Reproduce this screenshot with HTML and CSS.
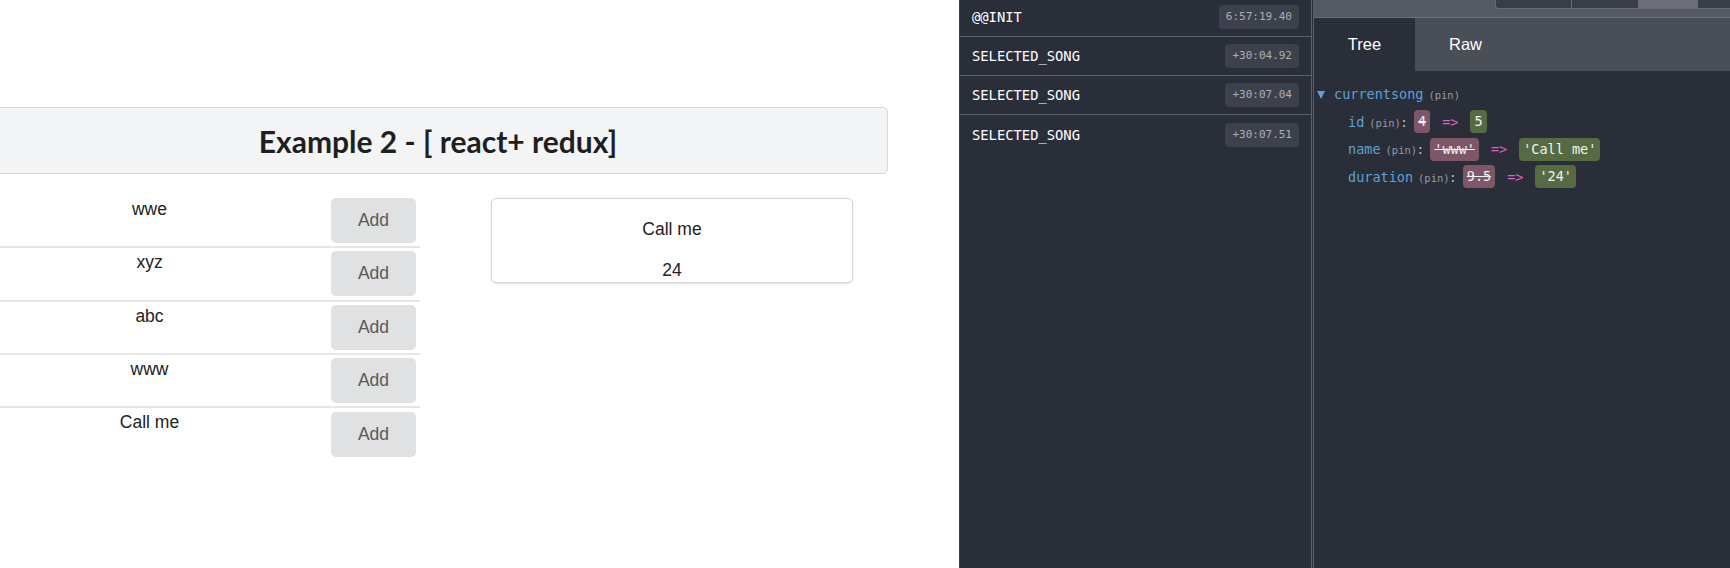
FILE: index.html
```html
<!DOCTYPE html>
<html lang="en">
<head>
<meta charset="utf-8">
<title>Example 2 - react + redux</title>
<link rel="stylesheet" href="styles.css">
</head>
<body>
<div class="screen">
  <main class="app">
    <div class="page">
      <h2 class="title">Example 2 - [ react+ redux]</h2>
      <div class="content">
        <ul class="songs">
          <li class="song"><span class="song-name">wwe</span><button class="add">Add</button></li>
          <li class="song"><span class="song-name">xyz</span><button class="add">Add</button></li>
          <li class="song"><span class="song-name">abc</span><button class="add">Add</button></li>
          <li class="song"><span class="song-name">www</span><button class="add">Add</button></li>
          <li class="song"><span class="song-name">Call me</span><button class="add">Add</button></li>
        </ul>
        <div class="card">
          <div class="card-title">Call me</div>
          <div class="card-dur">24</div>
        </div>
      </div>
    </div>
  </main>
  <aside class="devtools">
    <div class="actions">
      <div class="action"><span class="action-name">@@INIT</span><span class="time">6:57:19.40</span></div>
      <div class="action"><span class="action-name">SELECTED_SONG</span><span class="time">+30:04.92</span></div>
      <div class="action"><span class="action-name">SELECTED_SONG</span><span class="time">+30:07.04</span></div>
      <div class="action"><span class="action-name">SELECTED_SONG</span><span class="time">+30:07.51</span></div>
    </div>
    <div class="divider"></div>
    <div class="inspector">
      <div class="topbar">
        <div class="seg-group">
          <span class="seg seg-a"></span>
          <span class="seg seg-b"></span>
          <span class="seg seg-c active"></span>
          <span class="seg seg-d"></span>
        </div>
      </div>
      <div class="tabs">
        <div class="tab active">Tree</div>
        <div class="tab">Raw</div>
      </div>
      <div class="tree">
        <div class="tree-line"><span class="caret"></span><span class="key">currentsong</span><span class="pin">(pin)</span></div>
        <div class="tree-children">
          <div class="tree-line"><span class="key">id</span><span class="pin">(pin)</span><span class="colon">:</span><span class="val removed">4</span><span class="arrow">=&gt;</span><span class="val added">5</span></div>
          <div class="tree-line"><span class="key">name</span><span class="pin">(pin)</span><span class="colon">:</span><span class="val removed">'www'</span><span class="arrow">=&gt;</span><span class="val added">'Call me'</span></div>
          <div class="tree-line"><span class="key">duration</span><span class="pin">(pin)</span><span class="colon">:</span><span class="val removed">9.5</span><span class="arrow">=&gt;</span><span class="val added">'24'</span></div>
        </div>
      </div>
    </div>
  </aside>
</div>
</body>
</html>
```

FILE: styles.css
```css
* { box-sizing: border-box; }

html, body {
  margin: 0;
  padding: 0;
  background: #ffffff;
}

.screen {
  display: flex;
  width: 1730px;
  height: 568px;
  overflow: hidden;
  font-family: "Liberation Sans", Arial, sans-serif;
}

/* ---------- app side ---------- */
.app {
  width: 959px;
  flex: none;
  overflow: hidden;
  background: #ffffff;
  padding-top: 107px;
}

.page {
  width: 900px;
  margin-left: -12px;
}

.title {
  margin: 0;
  height: 67px;
  line-height: 67px;
  text-align: center;
  font-family: Lato, "Liberation Sans", sans-serif;
  font-weight: 700;
  font-size: 30px;
  color: #1f1f1f;
  background: #f3f4f5;
  border: 1px solid #d6d7d8;
  border-radius: 5px;
}

.content {
  display: flex;
  align-items: flex-start;
  margin-top: 21px;
}

.songs {
  list-style: none;
  margin: 0;
  padding: 0;
  width: 432px;
  flex: none;
}

.song {
  display: flex;
  align-items: center;
  height: 53.33px;
  border-bottom: 2px solid #e6e6e6;
}

.song:last-child {
  border-bottom: none;
}

.song-name {
  align-self: flex-start;
  width: 323px;
  padding-top: 2px;
  text-align: center;
  font-size: 17.5px;
  line-height: 25px;
  color: #222222;
}

.add {
  margin-left: 20px;
  width: 85px;
  height: 45px;
  padding: 0;
  border: none;
  border-radius: 5px;
  background: #e0e1e2;
  color: #595959;
  font-family: "Liberation Sans", Arial, sans-serif;
  font-size: 17.5px;
  line-height: 45px;
  text-align: center;
}

.card {
  flex: none;
  width: 362px;
  margin-left: 71px;
  margin-top: 3px;
  padding: 17.5px 0 2px;
  border: 1px solid #d4d4d5;
  border-radius: 5px;
  box-shadow: 0 1px 2px 0 rgba(34, 36, 38, 0.15);
  text-align: center;
  font-size: 17.5px;
  color: #222222;
}

.card-title {
  line-height: 25px;
}

.card-dur {
  margin-top: 18px;
  line-height: 20px;
}

/* ---------- devtools ---------- */
.devtools {
  flex: 1;
  display: flex;
  background: #2a2e39;
  border-left: 1px solid #3b3f49;
}

.actions {
  width: 351px;
  flex: none;
  margin-top: -2px;
}

.action {
  display: flex;
  align-items: center;
  justify-content: space-between;
  height: 39px;
  padding: 0 12px 0 12px;
  border-bottom: 1px solid #5a5e67;
}

.action:last-child {
  border-bottom: none;
}

.action-name {
  font-family: "DejaVu Sans Mono", "Liberation Mono", monospace;
  font-size: 13.8px;
  color: #ffffff;
}

.time {
  font-family: "DejaVu Sans Mono", "Liberation Mono", monospace;
  font-size: 11px;
  line-height: 24px;
  height: 24px;
  padding: 0 7px;
  border-radius: 4px;
  background: #3d414b;
  color: #acb0b8;
}

.divider {
  width: 3px;
  flex: none;
  border-left: 1px solid #5a5e67;
  border-right: 1px solid #5a5e67;
}

.inspector {
  flex: 1;
  display: flex;
  flex-direction: column;
  min-width: 0;
}

.topbar {
  height: 18px;
  flex: none;
  display: flex;
  align-items: flex-start;
  background: #555962;
  border-bottom: 1px solid #6c7078;
  overflow: hidden;
}

.seg-group {
  display: flex;
  margin-left: 181px;
  height: 9px;
  border: 1px solid #686c74;
  border-top: none;
  border-bottom-left-radius: 4px;
  overflow: hidden;
  flex: none;
}

.seg {
  display: block;
  height: 8px;
  background: #393d47;
  border-left: 1px solid #686c74;
}

.seg-a { width: 75px; border-left: none; }
.seg-b { width: 67px; }
.seg-c { width: 59px; }
.seg-d { width: 60px; }

.seg.active {
  background: #6c6f77;
}

.tabs {
  display: flex;
  height: 53px;
  flex: none;
  background: #4a4e57;
}

.tab {
  width: 101px;
  display: flex;
  align-items: center;
  justify-content: center;
  font-size: 16.5px;
  color: #ffffff;
}

.tab.active {
  background: #2a2e39;
}

.tree {
  padding: 9px 0 0 3px;
  font-family: "DejaVu Sans Mono", "Liberation Mono", monospace;
  font-size: 13.5px;
  color: #c8ccd4;
}

.tree-line {
  display: flex;
  align-items: center;
  height: 27.7px;
  white-space: pre;
}

.tree-children {
  padding-left: 31px;
}

.caret {
  width: 0;
  height: 0;
  border-left: 4px solid transparent;
  border-right: 4px solid transparent;
  border-top: 8px solid #5ca3d6;
  margin-top: 3px;
  margin-right: 9px;
}

.key {
  color: #5ca3d6;
}

.pin {
  font-size: 10.5px;
  color: #959aa3;
  margin-left: 5px;
  margin-top: 2px;
}

.colon {
  color: #b5b9c1;
  margin-left: -1px;
}

.val {
  display: inline-block;
  height: 23px;
  line-height: 23px;
  padding: 0 4px;
  border-radius: 4px;
  color: #f2f2f2;
  margin-left: 6px;
}

.removed {
  background: #7d5767;
  text-decoration: line-through;
}

.added {
  background: #576b43;
  margin-left: 12px;
}

.arrow {
  color: #d862cf;
  margin-left: 12px;
}
```
